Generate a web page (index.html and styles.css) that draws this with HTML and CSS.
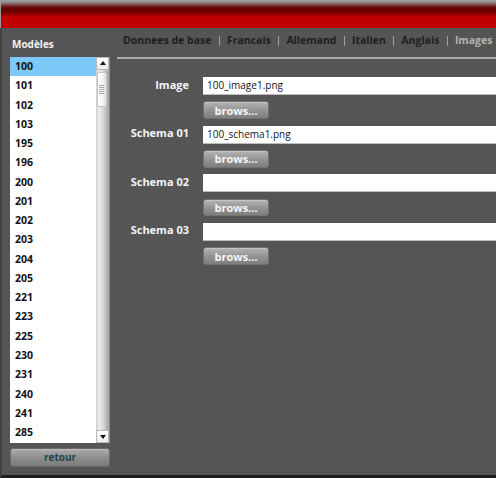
FILE: index.html
```html
<!DOCTYPE html>
<html lang="fr">
<head>
<meta charset="utf-8">
<title>Modèles</title>
<link rel="stylesheet" href="styles.css">
</head>
<body>
<div class="window">
  <header class="titlebar"></header>
  <div class="main">
    <aside class="sidebar">
      <div class="sidebar-title">Modèles</div>
      <div class="listbox">
        <ul class="items">
          <li class="selected">100</li>
          <li>101</li>
          <li>102</li>
          <li>103</li>
          <li>195</li>
          <li>196</li>
          <li>200</li>
          <li>201</li>
          <li>202</li>
          <li>203</li>
          <li>204</li>
          <li>205</li>
          <li>221</li>
          <li>223</li>
          <li>225</li>
          <li>230</li>
          <li>231</li>
          <li>240</li>
          <li>241</li>
          <li>285</li>
        </ul>
        <div class="scrollbar">
          <div class="sb-btn sb-up"><span class="tri-up"></span></div>
          <div class="sb-track">
            <div class="sb-thumb"><span class="grip"></span></div>
          </div>
          <div class="sb-btn sb-down"><span class="tri-down"></span></div>
        </div>
      </div>
      <button class="retour">retour</button>
    </aside>
    <section class="content">
      <nav class="tabs">
        <span class="tab">Donnees de base</span><span class="sep"></span>
        <span class="tab">Francais</span><span class="sep"></span>
        <span class="tab">Allemand</span><span class="sep"></span>
        <span class="tab">Italien</span><span class="sep"></span>
        <span class="tab">Anglais</span><span class="sep"></span>
        <span class="tab active">Images</span>
      </nav>
      <div class="form">
        <label class="label">Image</label>
        <div class="field">100_image1.png</div>
        <span class="spacer"></span>
        <button class="browse">brows...</button>

        <label class="label">Schema 01</label>
        <div class="field">100_schema1.png</div>
        <span class="spacer"></span>
        <button class="browse">brows...</button>

        <label class="label">Schema 02</label>
        <div class="field"></div>
        <span class="spacer"></span>
        <button class="browse">brows...</button>

        <label class="label">Schema 03</label>
        <div class="field"></div>
        <span class="spacer"></span>
        <button class="browse">brows...</button>
      </div>
    </section>
  </div>
</div>
</body>
</html>
```

FILE: styles.css
```css
* { box-sizing: border-box; }

html, body {
  margin: 0;
  padding: 0;
  background: #555555;
}

body {
  font-family: "Open Sans", "DejaVu Sans", sans-serif;
  width: 496px;
  height: 478px;
  overflow: hidden;
}

.window {
  width: 496px;
  height: 478px;
  display: flex;
  flex-direction: column;
  overflow: hidden;
}

.titlebar {
  height: 28px;
  flex: none;
  background: linear-gradient(to bottom,
    #a2a2a2 0px, #939393 2px, #7c4040 5px, #680202 8px,
    #6c0000 12px, #a00000 15px, #bf0000 17px, #c40000 28px);
  border-left: 1px solid #9a9a9a;
}

.main {
  flex: 1;
  display: flex;
  border-left: 2px solid #414141;
  border-bottom: 3px solid #1e1e1e;
  min-height: 0;
}

/* ---------- sidebar ---------- */
.sidebar {
  width: 115px;
  flex: none;
  padding-left: 8px;
  display: flex;
  flex-direction: column;
}

.sidebar-title {
  height: 29px;
  padding-top: 9.5px;
  padding-left: 2px;
  font-size: 10px;
  line-height: 12px;
  font-weight: 700;
  color: #f2f2f2;
}

.listbox {
  width: 100px;
  height: 386px;
  background: #ffffff;
  display: flex;
  overflow: hidden;
}

.items {
  list-style: none;
  margin: 0;
  padding: 0;
  flex: 1;
  overflow: hidden;
}

.items li {
  height: 19.27px;
  line-height: 19.27px;
  padding-left: 5px;
  font-size: 10.5px;
  font-weight: 700;
  color: #111111;
}

.items li.selected {
  background: #7ec8f8;
}

.scrollbar {
  width: 14px;
  flex: none;
  display: flex;
  flex-direction: column;
  border-right: 1px solid #8c8c8c;
  background: linear-gradient(to right, #cfcfcf 0, #ececec 25%, #d6d6d6 55%, #b2b2b2 85%, #a4a4a4 100%);
}

.sb-btn {
  height: 12.6px;
  flex: none;
  background: linear-gradient(to bottom, #ffffff, #ececec);
  border: 1px solid #b8b8b8;
  display: flex;
  align-items: center;
  justify-content: center;
}

.tri-up {
  width: 0;
  height: 0;
  border-left: 3px solid transparent;
  border-right: 3px solid transparent;
  border-bottom: 4px solid #111;
}

.tri-down {
  width: 0;
  height: 0;
  border-left: 3px solid transparent;
  border-right: 3px solid transparent;
  border-top: 4px solid #111;
}

.sb-track {
  flex: 1;
  padding-top: 2.5px;
}

.sb-thumb {
  width: 10px;
  height: 35px;
  margin-left: 0.5px;
  background: linear-gradient(to right, #ffffff, #f4f4f4 60%, #dcdcdc);
  border: 1px solid #c4c4c4;
  border-radius: 2px;
  display: flex;
  align-items: center;
  justify-content: center;
}

.grip {
  width: 5px;
  height: 9px;
  background: repeating-linear-gradient(to bottom, #a8a8a8 0, #a8a8a8 1px, transparent 1px, transparent 2px);
}

.retour {
  margin-top: 5.3px;
  width: 100px;
  height: 18.4px;
  padding: 0;
  border: 1px solid #6a6a6a;
  border-radius: 3px;
  background: linear-gradient(to bottom, #acacac, #8e8e8e 50%, #7a7a7a);
  box-shadow: inset 0 1px 0 #bdbdbd;
  font-family: "Open Sans", "DejaVu Sans", sans-serif;
  font-size: 10px;
  font-weight: 700;
  line-height: 16px;
  color: #22444e;
  text-align: center;
}

/* ---------- content ---------- */
.content {
  flex: 1;
  min-width: 0;
  display: flex;
  flex-direction: column;
}

.tabs {
  height: 30.7px;
  padding-top: 5.8px;
  padding-left: 6px;
  border-bottom: 2px solid #ababab;
  display: flex;
  align-items: flex-start;
  white-space: nowrap;
  font-size: 10.5px;
  line-height: 12px;
  font-weight: 700;
}

.tab {
  color: #1e1e1e;
}

.tab.active {
  color: #b4b4b4;
}

.sep {
  width: 1px;
  height: 10px;
  margin: 2px 7px 0 7.5px;
  background: #9c9c9c;
  flex: none;
}

.form {
  padding-top: 18.3px;
  display: grid;
  grid-template-columns: 72px 1fr;
  column-gap: 14px;
  row-gap: 6.5px;
  grid-template-rows: repeat(4, 18px 17.6px);
}

.label {
  text-align: right;
  padding-top: 1.6px;
  font-size: 11px;
  line-height: 12px;
  font-weight: 700;
  color: #f4f4f4;
}

.field {
  height: 18px;
  background: #ffffff;
  border-bottom: 1px solid #bdbdbd;
  padding-left: 4px;
  font-size: 10px;
  line-height: 17px;
  color: #151515;
}

.browse {
  width: 66px;
  height: 17.6px;
  padding: 0;
  border: 1px solid #727272;
  border-radius: 3px;
  background: linear-gradient(to bottom, #b4b4b4, #959595 50%, #7e7e7e);
  box-shadow: inset 0 1px 0 #c4c4c4;
  font-family: "Open Sans", "DejaVu Sans", sans-serif;
  font-size: 11px;
  font-weight: 700;
  line-height: 15px;
  color: #f6f6f6;
  text-align: center;
}
```
